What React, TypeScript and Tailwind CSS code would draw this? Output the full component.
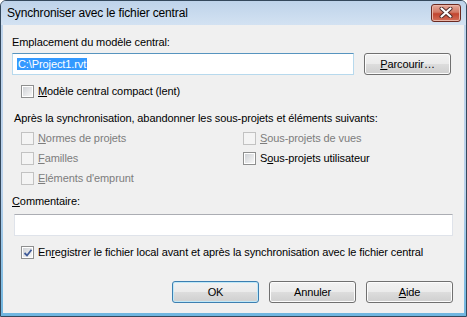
import React from "react";

const body = "font-['Tahoma','Liberation_Sans',sans-serif] text-[11px] leading-[13px] tracking-[-0.1px]";

function Check({ checked = false, disabled = false }: { checked?: boolean; disabled?: boolean }) {
  return (
    <span
      className={`relative flex h-[13px] w-[13px] shrink-0 items-center justify-center border ${
        disabled ? "border-[#c2c2c2] bg-[#f4f4f4]" : "border-[#8e8f8f] bg-white"
      }`}
    >
      <span
        className={`h-[9px] w-[9px] ${
          disabled ? "bg-[#f4f4f4]" : "bg-gradient-to-br from-[#cfd2d6] to-[#f7f7f7]"
        }`}
      />
      {checked && (
        <svg className="absolute left-[1px] top-[1px]" width="10" height="10" viewBox="0 0 10 10">
          <path d="M1.5 5 L4 7.5 L8.5 1.8" fill="none" stroke="#3f5b99" strokeWidth="1.8" />
        </svg>
      )}
    </span>
  );
}

function Row({
  label,
  u,
  checked,
  disabled,
}: {
  label: string;
  u: number;
  checked?: boolean;
  disabled?: boolean;
}) {
  return (
    <div className="flex h-[13px] items-center gap-[4px]">
      <Check checked={checked} disabled={disabled} />
      <span className={disabled ? "text-[#7d7d7d]" : "text-black"}>
        {label.slice(0, u)}
        <span className="underline underline-offset-[1px]">{label[u]}</span>
        {label.slice(u + 1)}
      </span>
    </div>
  );
}

function Btn({ children, primary = false }: { children: React.ReactNode; primary?: boolean }) {
  return (
    <button
      className={`flex h-[22px] w-[87px] items-center justify-center rounded-[3px] border ${
        primary ? "border-[#3c7fb1] shadow-[inset_0_0_0_1px_#bfe8f8]" : "border-[#707070] shadow-[inset_0_0_0_1px_#fcfcfc]"
      } bg-[linear-gradient(#f2f2f2_0%,#ebebeb_50%,#dddddd_50%,#cfcfcf_100%)] text-black`}
    >
      {children}
    </button>
  );
}

export default function App() {
  return (
    <div className="h-[317px] w-[467px] bg-white">
      <div className="flex h-[317px] w-[467px] flex-col rounded-t-[6px] border border-[#34485c] bg-[linear-gradient(#c0d5ec,#b9d1eb_60%,#6fb6e0)]">
        {/* title bar */}
        <div className="flex h-[24px] shrink-0 items-center justify-between rounded-t-[5px] bg-[linear-gradient(#bed3ea,#d3e2f2)] pl-[6px] pr-[5px]">
          <span className="font-['Liberation_Sans',sans-serif] text-[12px] tracking-[-0.15px] text-black">
            Synchroniser avec le fichier central
          </span>
          <span className="mt-[-1px] flex h-[18px] w-[30px] items-center justify-center rounded-[3px] border border-[#6b2a21] bg-[linear-gradient(#e6aa9b,#d27a66_45%,#c2452f_55%,#d3705a)] shadow-[inset_0_0_0_1px_#eab6a8]">
            <svg width="14" height="11" viewBox="0 0 14 11">
              <path d="M2.5 1.5 L11.5 9.5 M11.5 1.5 L2.5 9.5" stroke="#4b2a28" strokeWidth="4" strokeLinecap="round" />
              <path d="M2.5 1.5 L11.5 9.5 M11.5 1.5 L2.5 9.5" stroke="#ffffff" strokeWidth="2.2" strokeLinecap="round" />
            </svg>
          </span>
        </div>

        {/* client */}
        <div className={`mx-[2px] mb-[3px] flex flex-1 flex-col bg-[#f0f0f0] pl-[9px] ${body} text-black`}>
          <div className="mt-[11px] h-[13px]">Emplacement du modèle central:</div>

          <div className="mt-[4px] flex h-[22px] gap-[10px]">
            <div className="flex h-[22px] w-[342px] items-center border border-[#b7d9ed] border-t-[#5794bf] bg-white pl-[4px]">
              <span className="bg-[#3399ff] px-[1px] leading-[12px] text-white">C:\Project1.rvt</span>
            </div>
            <Btn>
              <span>
                <span className="underline underline-offset-[1px]">P</span>arcourir…
              </span>
            </Btn>
          </div>

          <div className="ml-[9px] mt-[10px]">
            <Row label="Modèle central compact (lent)" u={0} />
          </div>

          <div className="ml-[2px] mt-[14px] h-[13px]">
            Après la synchronisation, abandonner les sous-projets et éléments suivants:
          </div>

          <div className="ml-[9px] mt-[7px] grid grid-cols-[222px_1fr] gap-y-[7px]">
            <Row label="Normes de projets" u={0} disabled />
            <Row label="Sous-projets de vues" u={0} disabled />
            <Row label="Familles" u={0} disabled />
            <Row label="Sous-projets utilisateur" u={1} />
            <Row label="Eléments d'emprunt" u={0} disabled />
          </div>

          <div className="mt-[10px] h-[13px]">
            <span className="underline underline-offset-[1px]">C</span>ommentaire:
          </div>

          <div className="ml-[2px] mt-[6px] h-[22px] w-[439px] border border-[#dfe3ea] border-t-[#abadb3] bg-white" />

          <div className="ml-[9px] mt-[10px]">
            <Row label="Enregistrer le fichier local avant et après la synchronisation avec le fichier central" u={2} checked />
          </div>

          <div className="ml-[160px] mt-[22px] flex gap-[10px]">
            <Btn primary>OK</Btn>
            <Btn>Annuler</Btn>
            <Btn>
              <span>
                <span className="underline underline-offset-[1px]">A</span>ide
              </span>
            </Btn>
          </div>
        </div>
      </div>
    </div>
  );
}
